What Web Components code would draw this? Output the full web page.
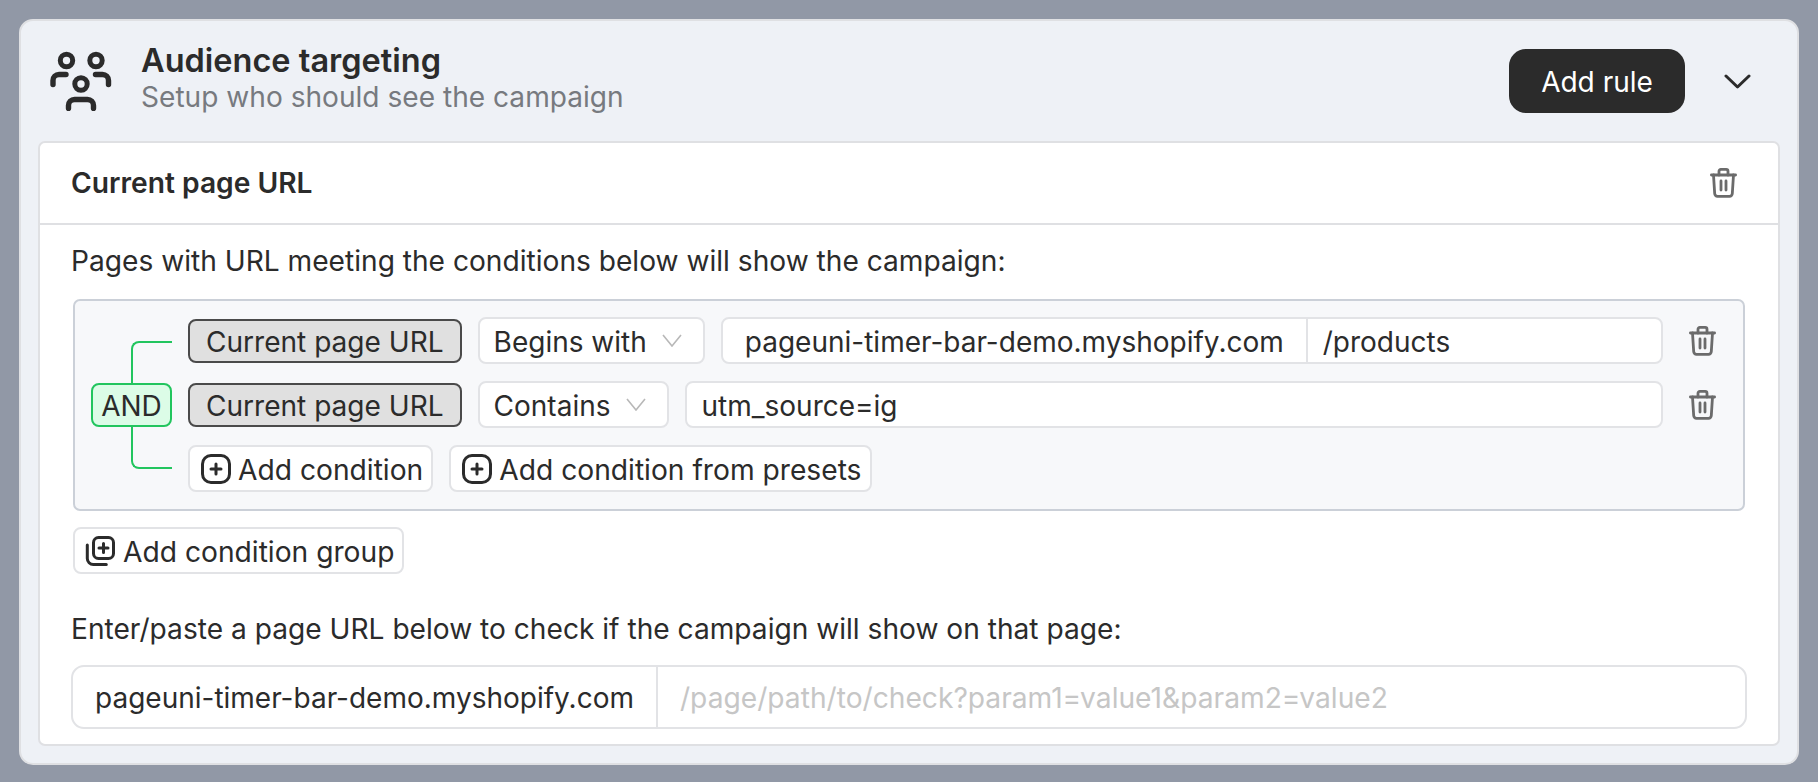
<!DOCTYPE html>
<html lang="en-us">
<head>
<meta charset="utf-8">
<style>
    html, body { margin: 0; padding: 0; }
    body {
        background: #9198a6;
        padding: 19px;
        font-family: Inter, "Liberation Sans", sans-serif;
        font-size: 28px;
        color: #2b2b2b;
    }
</style>
</head>
<body>

<template id="audienceCardTemplate">
    <style>
        :host {
            display: block;
            width: 1780px;
            height: 746px;
            box-sizing: border-box;
            background: #eef1f6;
            border: 2px solid #dfe0e3;
            border-radius: 14px;
            padding: 0 17px 16px;
        }
        .head {
            display: flex;
            align-items: center;
            height: 120px;
            padding-left: 12px;
        }
        .icon { width: 62px; height: 60px; margin-right: 29px; flex: none; display: block; }
        .titles { flex: 1; display: flex; flex-direction: column; margin-top: -4px; }
        .title { font-size: 32.5px; font-weight: 600; line-height: 36px; }
        .sub { font-size: 28.1px; line-height: 36px; color: #777a7f; }
        .add-rule {
            width: 176px;
            height: 64px;
            background: #2b2b2b;
            color: #fff;
            border-radius: 17px;
            display: flex;
            align-items: center;
            justify-content: center;
            font-size: 28px;
            padding-top: 1px;
            box-sizing: border-box;
        }
        .toggle { width: 95px; display: flex; justify-content: center; flex: none; padding-left: 9px; box-sizing: border-box; }
    </style>
    <div class="head">
        <svg class="icon" viewBox="0 0 62 60" fill="none" stroke="#2b2b2b" stroke-width="5" stroke-linecap="round">
            <circle cx="16.5" cy="9.5" r="6.2"/>
            <circle cx="46" cy="9.5" r="6.2"/>
            <circle cx="31" cy="33" r="6.2"/>
            <path d="M3 33.5v-4a6 6 0 0 1 6-6h7" stroke-width="5.4"/>
            <path d="M58.5 33.5v-4a6 6 0 0 0-6-6h-7" stroke-width="5.4"/>
            <path d="M18.5 57.5v-3a6 6 0 0 1 6-6h13a6 6 0 0 1 6 6v3" stroke-width="5.4"/>
        </svg>
        <div class="titles">
            <div class="title">Audience targeting</div>
            <div class="sub">Setup who should see the campaign</div>
        </div>
        <div class="add-rule">Add rule</div>
        <div class="toggle">
            <svg width="27" height="15" viewBox="0 0 27 15" fill="none" stroke="#2b2b2b" stroke-width="3" stroke-linecap="round" stroke-linejoin="round"><path d="M2 2l11.5 11L25 2"/></svg>
        </div>
    </div>
    <slot></slot>
</template>

<template id="ruleCardTemplate">
    <style>
        :host {
            display: block;
            background: #fff;
            border: 2px solid #dfe0e3;
            border-radius: 7px;
        }
        .head {
            display: flex;
            align-items: center;
            justify-content: space-between;
            height: 80px;
            padding: 0 41px 0 31px;
            border-bottom: 2px solid #dfe0e3;
            font-weight: 600;
            font-size: 28.2px;
        }
        .body { padding: 18px 31px 15px; }
    </style>
    <div class="head"><slot name="title"></slot><trash-icon></trash-icon></div>
    <div class="body"><slot></slot></div>
</template>

<template id="condGroupTemplate">
    <style>
        :host {
            display: flex;
            margin: 20px 2px 16px;
            padding: 16px 21px 17px 16px;
            background: #f7f8fa;
            border: 2px solid #cbd0d8;
            border-radius: 7px;
        }
        .logic { display: flex; flex-direction: column; width: 81px; margin-right: 16px; flex: none; }
        .line { box-sizing: border-box; flex: 1; width: 41px; margin-left: 40px; border: 0 solid #22c55e; border-left-width: 2px; }
        .line.up { margin-top: 24px; border-top-width: 2px; border-top-left-radius: 8px; }
        .line.down { margin-bottom: 23px; border-bottom-width: 2px; border-bottom-left-radius: 8px; }
        .and {
            box-sizing: border-box;
            height: 44px;
            padding-top: 2px;
            background: #dcfce7;
            border: 2px solid #22c55e;
            border-radius: 8px;
            display: flex;
            align-items: center;
            justify-content: center;
        }
        .rows { flex: 1; min-width: 0; display: flex; flex-direction: column; gap: 17px; }
    </style>
    <div class="logic">
        <div class="line up"></div>
        <div class="and">AND</div>
        <div class="line down"></div>
    </div>
    <div class="rows"><slot></slot></div>
</template>

<template id="condRowTemplate">
    <style>
        :host { display: flex; align-items: center; gap: 16px; height: 47px; }
        trash-icon { margin-left: 10px; margin-right: 6px; }
    </style>
    <slot></slot>
    <trash-icon></trash-icon>
</template>

<template id="fieldChipTemplate">
    <style>
        :host {
            display: flex;
            align-items: center;
            box-sizing: border-box;
            height: 44px;
            padding: 2px 16px 0;
            background: #e0e0e0;
            border: 2px solid #4a4a4a;
            border-radius: 8px;
            white-space: nowrap;
            flex: none;
            font-size: 28.06px;
        }
    </style>
    <slot></slot>
</template>

<template id="opSelectTemplate">
    <style>
        :host {
            display: flex;
            align-items: center;
            box-sizing: border-box;
            height: 47px;
            padding: 2px 21px 0 14px;
            background: #fff;
            border: 2px solid #e2e3e6;
            border-radius: 8px;
            white-space: nowrap;
            flex: none;
        }
        svg { margin-left: 15px; margin-top: -2px; }
    </style>
    <slot></slot>
    <svg width="20" height="13" viewBox="0 0 20 13" fill="none" stroke="#b8b8b8" stroke-width="1.6"><path d="M1 1l9 11 9-11"/></svg>
</template>

<template id="valueFieldTemplate">
    <style>
        :host {
            display: flex;
            flex: 1;
            min-width: 0;
            box-sizing: border-box;
            height: 47px;
            background: #fff;
            border: 2px solid #e2e3e6;
            border-radius: 8px;
            white-space: nowrap;
        }
        :host([tall]) { height: 64px; border-radius: 13px; }
        .domain { display: none; align-items: center; padding: 2px 22px 0 22px; border-right: 2px solid #e2e3e6; }
        :host([domain]) .domain { display: flex; }
        .value { flex: 1; display: flex; align-items: center; padding: 2px 15px 0; }
        :host([tall]) .value { padding: 2px 22px 0; color: #c6c6c6; font-size: 28.18px; }
    </style>
    <div class="domain"></div>
    <div class="value"><slot></slot></div>
</template>

<template id="addButtonTemplate">
    <style>
        :host {
            display: inline-flex;
            align-items: center;
            gap: 7px;
            box-sizing: border-box;
            height: 47px;
            padding: 0 8px 0 11px;
            background: #fff;
            border: 2px solid #e2e3e6;
            border-radius: 8px;
            white-space: nowrap;
            flex: none;
            font-size: 28.2px;
        }
        svg { display: block; flex: none; }
        .label { padding-top: 2px; }
        :host([group]) { vertical-align: top; gap: 8px; padding-left: 10px; }
    </style>
    <svg width="30" height="30" viewBox="0 0 30 30" fill="none" stroke="#2b2b2b" stroke-width="3" stroke-linecap="round" stroke-linejoin="round"></svg>
    <span class="label"><slot></slot></span>
</template>

<template id="trashIconTemplate">
    <style>
        :host { display: flex; align-items: center; justify-content: center; width: 27px; height: 30px; flex: none; }
    </style>
    <svg width="27" height="30" viewBox="0 0 27 30" fill="none" stroke="#6b6b6b" stroke-width="2.8" stroke-linecap="round" stroke-linejoin="round">
        <path d="M1.4 7h24.2"/>
        <path d="M9 7V3.2a1.8 1.8 0 0 1 1.8-1.8h5.4A1.8 1.8 0 0 1 18 3.2V7"/>
        <path d="M3.5 7l1.2 18.6a2.8 2.8 0 0 0 2.8 2.8h12a2.8 2.8 0 0 0 2.8-2.8L23.5 7"/>
        <path d="M11 13v9M16 13v9"/>
    </svg>
</template>

<audience-card>
    <rule-card>
        <span slot="title">Current page URL</span>
        <div style="line-height:36px;font-size:28.14px">Pages with URL meeting the conditions below will show the campaign:</div>
        <cond-group>
            <cond-row>
                <field-chip>Current page URL</field-chip>
                <op-select>Begins with</op-select>
                <value-field domain="pageuni-timer-bar-demo.myshopify.com">/products</value-field>
            </cond-row>
            <cond-row>
                <field-chip>Current page URL</field-chip>
                <op-select>Contains</op-select>
                <value-field>utm_source=ig</value-field>
            </cond-row>
            <cond-row data-noact>
                <add-button>Add condition</add-button>
                <add-button>Add condition from presets</add-button>
            </cond-row>
        </cond-group>
        <add-button group style="margin-left:2px">Add condition group</add-button>
        <div style="line-height:36px;font-size:28.14px;margin:37px 0 18px">Enter/paste a page URL below to check if the campaign will show on that page:</div>
        <value-field tall domain="pageuni-timer-bar-demo.myshopify.com">/page/path/to/check?param1=value1&amp;param2=value2</value-field>
    </rule-card>
</audience-card>

<script>
    // every element just clones its template into an open shadow root
    function shadowFrom(el, id) {
        const template = document.getElementById(id).content;
        el.attachShadow({ mode: 'open' }).appendChild(template.cloneNode(true));
    }

    class AudienceCard extends HTMLElement {
        constructor() { super(); shadowFrom(this, 'audienceCardTemplate'); }
    }
    class RuleCard extends HTMLElement {
        constructor() { super(); shadowFrom(this, 'ruleCardTemplate'); }
    }
    class CondGroup extends HTMLElement {
        constructor() { super(); shadowFrom(this, 'condGroupTemplate'); }
    }
    class CondRow extends HTMLElement {
        constructor() { super(); shadowFrom(this, 'condRowTemplate'); }
        connectedCallback() {
            // the row of add buttons has no delete action
            if (this.hasAttribute('data-noact')) this.shadowRoot.querySelector('trash-icon').remove();
        }
    }
    class FieldChip extends HTMLElement {
        constructor() { super(); shadowFrom(this, 'fieldChipTemplate'); }
    }
    class OpSelect extends HTMLElement {
        constructor() { super(); shadowFrom(this, 'opSelectTemplate'); }
    }
    class ValueField extends HTMLElement {
        constructor() { super(); shadowFrom(this, 'valueFieldTemplate'); }
        connectedCallback() {
            this.shadowRoot.querySelector('.domain').textContent = this.getAttribute('domain') || '';
        }
    }
    class AddButton extends HTMLElement {
        constructor() { super(); shadowFrom(this, 'addButtonTemplate'); }
        connectedCallback() {
            const svg = this.shadowRoot.querySelector('svg');
            if (this.hasAttribute('group')) {
                svg.innerHTML = '<rect x="8.5" y="1.5" width="20" height="21" rx="5"/><path d="M18.5 7.5v9M14 12h9"/><path d="M2.3 9v13.5a6 6 0 0 0 6 6h13"/>';
            } else {
                svg.innerHTML = '<rect x="1.5" y="1.5" width="27" height="27" rx="8.5"/><path d="M15 10v10M10 15h10"/>';
            }
        }
    }
    class TrashIcon extends HTMLElement {
        constructor() { super(); shadowFrom(this, 'trashIconTemplate'); }
    }

    customElements.define('audience-card', AudienceCard);
    customElements.define('rule-card', RuleCard);
    customElements.define('cond-group', CondGroup);
    customElements.define('cond-row', CondRow);
    customElements.define('field-chip', FieldChip);
    customElements.define('op-select', OpSelect);
    customElements.define('value-field', ValueField);
    customElements.define('add-button', AddButton);
    customElements.define('trash-icon', TrashIcon);
</script>
</body>
</html>
